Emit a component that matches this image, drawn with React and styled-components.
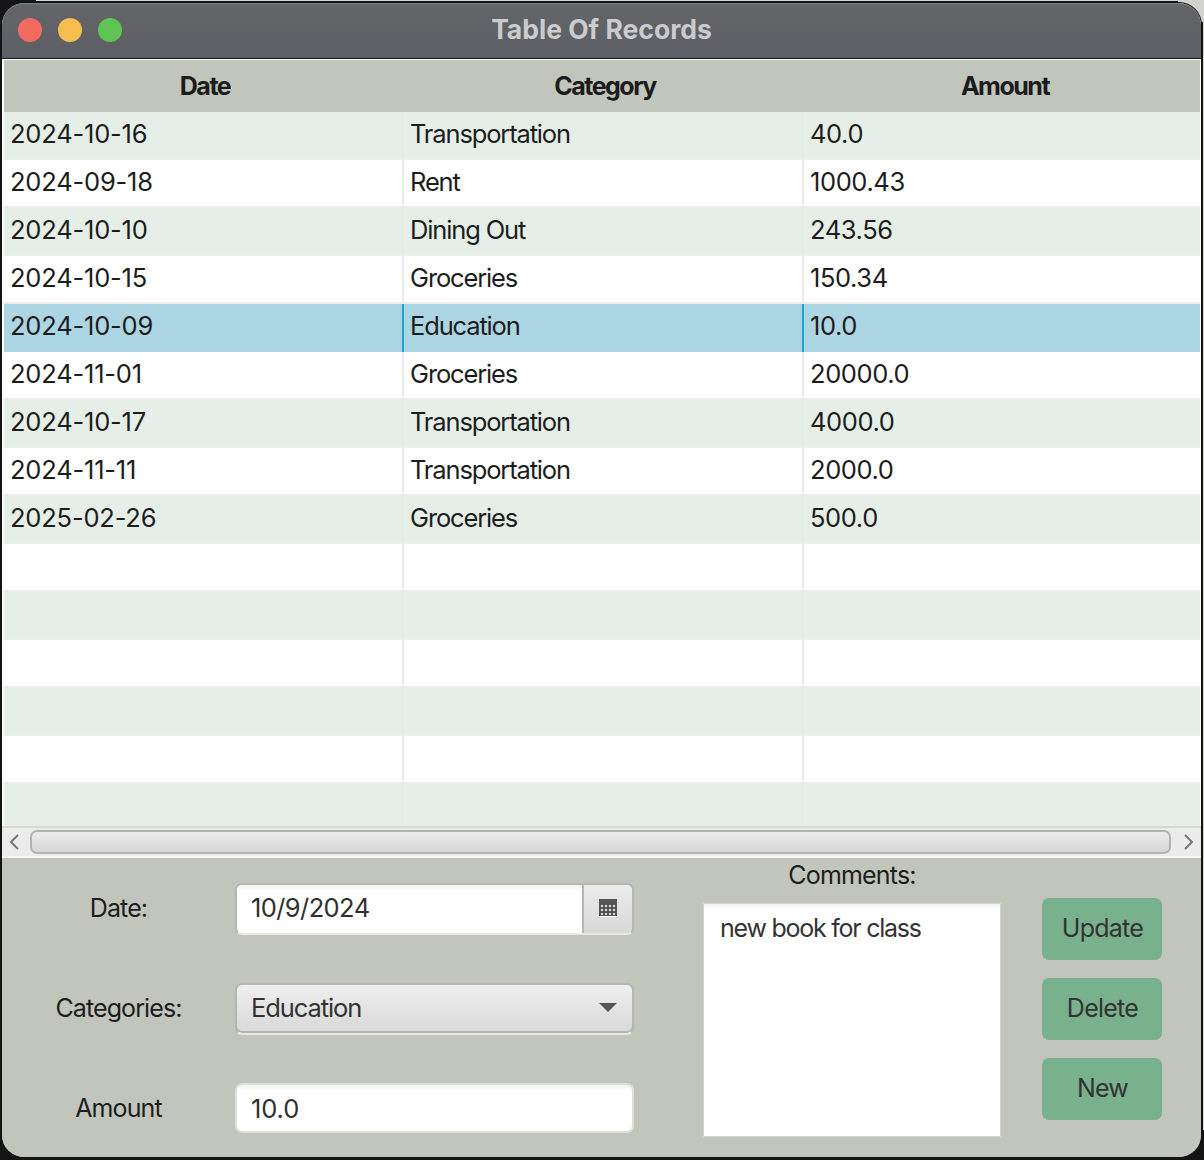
import React from "react";
import styled, { createGlobalStyle } from "styled-components";

const Global = createGlobalStyle`
  html, body { margin: 0; padding: 0; background: #141414; }
  * { box-sizing: border-box; }
  body { font-family: Inter, "Liberation Sans", sans-serif; -webkit-font-smoothing: antialiased; }
`;

const Stage = styled.div`
  width: 1204px;
  height: 1160px;
  padding: 3px 3px 3px 2px;
  background:
    linear-gradient(#d2d3ce, #d2d3ce) 36px 0 / 100% 1px no-repeat,
    linear-gradient(#d2d3ce, #d2d3ce) 1203px 0 / 1px 1130px no-repeat,
    linear-gradient(#d2d3ce, #d2d3ce) 1178px 0 / 26px 22px no-repeat,
    #141414;
`;

const Window = styled.div`
  width: 1199px;
  height: 1154px;
  border-radius: 22px;
  overflow: hidden;
  background: #c2c5bc;
  box-shadow: 0 0 0 1px #111;
  display: flex;
  flex-direction: column;
`;

const TitleBar = styled.div`
  height: 56px;
  flex: none;
  position: relative;
  display: flex;
  align-items: center;
  justify-content: center;
  background: linear-gradient(#646569, #5e5f64);
  border-bottom: 1px solid #17181a;
  border-radius: 22px 22px 0 0;
  box-shadow: inset 0 1px 0 #7d7e82;
`;

const Lights = styled.div`
  position: absolute;
  left: 16px;
  top: 15px;
  display: flex;
  gap: 16px;
`;

const Light = styled.span`
  width: 24px;
  height: 24px;
  border-radius: 50%;
  background: ${(p) => p.$color};
`;

const Title = styled.div`
  font-size: 26.5px;
  font-weight: 700;
  color: #cbcbcd;
  margin-bottom: 4px;
`;

const TableArea = styled.div`
  height: 799px;
  flex: none;
  background: #fff;
  padding: 1px 1px 0 2px;
  display: flex;
  flex-direction: column;
`;

const HeaderRow = styled.div`
  height: 52px;
  flex: none;
  display: grid;
  grid-template-columns: 400px 400px 400px;
  overflow: hidden;
  background: #c2c5bc;
`;

const HeaderCell = styled.div`
  display: flex;
  align-items: center;
  justify-content: center;
  padding-left: 2px;
  font-size: 25px;
  font-weight: 700;
  letter-spacing: -1.5px;
  color: #1c1c1c;
`;

const Row = styled.div`
  height: ${(p) => (p.$last ? "42px" : "48px")};
  flex: none;
  display: grid;
  grid-template-columns: 400px 400px 1fr;
  background: ${(p) => (p.$selected ? "#add6e5" : p.$odd ? "#e5efe7" : "#fff")};
  border-bottom: ${(p) => (p.$last || p.$selected ? "0" : "2px")} solid ${(p) => p.$line};
`;

const Cell = styled.div`
  display: flex;
  align-items: center;
  padding: 0 0 ${(p) => (p.$selected ? "6px" : "4px")} 6px;
  font-size: 25.5px;
  letter-spacing: ${(p) => p.$spacing};
  color: #1d1d1d;
  border-right: 2px solid ${(p) => (p.$selected ? "#22a2cf" : p.$odd ? "#e2ebe4" : "#ececec")};
  &:last-child { border-right: 0; }
`;

const ScrollBar = styled.div`
  height: 32px;
  flex: none;
  margin: 0 -1px 0 -2px;
  background: #ececec;
  border-top: 2px solid #d9d9d9;
  border-bottom: 2px solid #f6f6f6;
  display: flex;
  align-items: center;
  padding: 0 6px;
`;

const Thumb = styled.div`
  flex: 1;
  height: 24px;
  margin: 0 12px 0 10px;
  border: 2px solid #b3b3b3;
  border-radius: 7px;
  background: linear-gradient(#ececec, #d6d6d6);
`;

const Arrow = styled.svg`
  width: 12px;
  height: 18px;
  flex: none;
`;

const FormPanel = styled.div`
  flex: 1;
  display: flex;
  align-items: flex-start;
  background: #c2c5bc;
  padding-left: 16px;
`;

const Fields = styled.div`
  width: 617px;
  padding-top: 25px;
  display: flex;
  flex-direction: column;
  gap: 50px;
`;

const FieldRow = styled.div`
  display: flex;
  align-items: flex-start;
  height: 50px;
`;

const Label = styled.div`
  width: 201px;
  height: 50px;
  line-height: 50px;
  margin-right: 16px;
  text-align: center;
  font-size: 25px;
  letter-spacing: -0.9px;
  color: #1d1d1d;
`;

const InputShell = styled.div`
  width: 399px;
  height: ${(p) => (p.$bordered ? "52px" : "50px")};
  flex: none;
  display: flex;
  border-radius: 7px;
  overflow: hidden;
  background: #fff;
  border: 2px solid ${(p) => (p.$bordered ? "#b5b5b5" : "#dfe0da")};
  border-bottom-color: ${(p) => (p.$bordered ? "#e9e9e6" : "#dfe0da")};
  box-shadow: ${(p) => (p.$bordered ? "inset 0 -2px 0 #b5b5b5" : "none")};
`;

const InputText = styled.div`
  flex: 1;
  display: flex;
  align-items: center;
  padding: 0 0 ${(p) => (p.$tight ? "3px" : "0")} 14px;
  font-size: 25.5px;
  letter-spacing: ${(p) => (p.$tight ? "-0.6px" : "-0.1px")};
  color: #303030;
  background: linear-gradient(#f3f3f3 0, #fff 6px);
`;

const CalendarButton = styled.div`
  width: 50px;
  flex: none;
  display: flex;
  align-items: center;
  justify-content: center;
  padding-bottom: 2px;
  border-left: 2px solid #b5b5b5;
  background: linear-gradient(#ececec, #d8d8d8);
`;

const SelectShell = styled.div`
  width: 399px;
  height: 52px;
  flex: none;
  display: flex;
  align-items: center;
  justify-content: space-between;
  padding: 0 15px 3px 14px;
  border-radius: 7px;
  border: 2px solid #b5b5b5;
  border-bottom-color: #e9e9e6;
  box-shadow: inset 0 -2px 0 #b5b5b5;
  background: linear-gradient(#efefef, #d8d8d8);
  font-size: 25.5px;
  letter-spacing: -1.1px;
  color: #333;
`;

const Caret = styled.span`
  width: 0;
  height: 0;
  border-left: 9px solid transparent;
  border-right: 9px solid transparent;
  border-top: 9px solid #555;
`;

const CommentsColumn = styled.div`
  width: 298px;
  margin-left: 68px;
  display: flex;
  flex-direction: column;
  align-items: stretch;
`;

const CommentsLabel = styled.div`
  height: 34px;
  margin-bottom: 11px;
  display: flex;
  align-items: center;
  justify-content: center;
  font-size: 25px;
  letter-spacing: -0.8px;
  color: #1d1d1d;
`;

const CommentsBox = styled.div`
  height: 234px;
  padding: 9px 16px;
  background: linear-gradient(#f2f2f2 0, #fff 6px);
  border: 1px solid #d4d5d0;
  font-size: 25px;
  letter-spacing: -1.25px;
  line-height: 30px;
  color: #333;
`;

const Actions = styled.div`
  width: 120px;
  margin-left: 41px;
  padding-top: 40px;
  display: flex;
  flex-direction: column;
  gap: 18px;
`;

const ActionButton = styled.button`
  height: 62px;
  border: 0;
  border-radius: 7px;
  background: #78b18c;
  font-family: inherit;
  font-size: 25px;
  letter-spacing: -0.75px;
  color: #333;
  padding: 0 0 2px 1px;
`;

const rows = [
  ["2024-10-16", "Transportation", "40.0"],
  ["2024-09-18", "Rent", "1000.43"],
  ["2024-10-10", "Dining Out", "243.56"],
  ["2024-10-15", "Groceries", "150.34"],
  ["2024-10-09", "Education", "10.0"],
  ["2024-11-01", "Groceries", "20000.0"],
  ["2024-10-17", "Transportation", "4000.0"],
  ["2024-11-11", "Transportation", "2000.0"],
  ["2025-02-26", "Groceries", "500.0"],
  ["", "", ""],
  ["", "", ""],
  ["", "", ""],
  ["", "", ""],
  ["", "", ""],
  ["", "", ""],
];

const columnSpacing = ["-0.2px", "-1.15px", "-0.4px"];
const selectedIndex = 4;

const CalendarIcon = () => (
  <svg width="18" height="18" viewBox="0 0 18 18">
    <rect x="0" y="0" width="18" height="18" fill="#555" />
    <rect x="0" y="17" width="18" height="1" fill="#fff" />
    {[2, 6, 10, 14].flatMap((x) =>
      [6, 10, 14].map((y) => <rect key={`${x}-${y}`} x={x} y={y} width="2" height="2" fill="#ddd" />)
    )}
  </svg>
);

export default function App() {
  return (
    <Stage>
      <Global />
      <Window>
        <TitleBar>
          <Lights>
            <Light $color="#f26b60" />
            <Light $color="#f6bd4f" />
            <Light $color="#5ec456" />
          </Lights>
          <Title>Table Of Records</Title>
        </TitleBar>
        <TableArea>
          <HeaderRow>
            <HeaderCell>Date</HeaderCell>
            <HeaderCell>Category</HeaderCell>
            <HeaderCell>Amount</HeaderCell>
          </HeaderRow>
          {rows.map((r, i) => {
            const odd = i % 2 === 0;
            const selected = i === selectedIndex;
            const line = odd || i + 1 === selectedIndex ? "#ececec" : "#e5efe7";
            return (
              <Row key={i} $odd={odd} $selected={selected} $last={i === rows.length - 1} $line={line}>
                {r.map((c, j) => (
                  <Cell key={j} $odd={odd} $selected={selected} $spacing={columnSpacing[j]}>
                    {c}
                  </Cell>
                ))}
              </Row>
            );
          })}
          <ScrollBar>
            <Arrow viewBox="0 0 12 18">
              <path d="M10 2 L3 9 L10 16" fill="none" stroke="#777" strokeWidth="2" />
            </Arrow>
            <Thumb />
            <Arrow viewBox="0 0 12 18">
              <path d="M2 2 L9 9 L2 16" fill="none" stroke="#777" strokeWidth="2" />
            </Arrow>
          </ScrollBar>
        </TableArea>
        <FormPanel>
          <Fields>
            <FieldRow>
              <Label>Date:</Label>
              <InputShell $bordered>
                <InputText $tight>10/9/2024</InputText>
                <CalendarButton>
                  <CalendarIcon />
                </CalendarButton>
              </InputShell>
            </FieldRow>
            <FieldRow>
              <Label>Categories:</Label>
              <SelectShell>
                Education
                <Caret />
              </SelectShell>
            </FieldRow>
            <FieldRow>
              <Label>Amount</Label>
              <InputShell>
                <InputText>10.0</InputText>
              </InputShell>
            </FieldRow>
          </Fields>
          <CommentsColumn>
            <CommentsLabel>Comments:</CommentsLabel>
            <CommentsBox>new book for class</CommentsBox>
          </CommentsColumn>
          <Actions>
            <ActionButton>Update</ActionButton>
            <ActionButton>Delete</ActionButton>
            <ActionButton>New</ActionButton>
          </Actions>
        </FormPanel>
      </Window>
    </Stage>
  );
}
